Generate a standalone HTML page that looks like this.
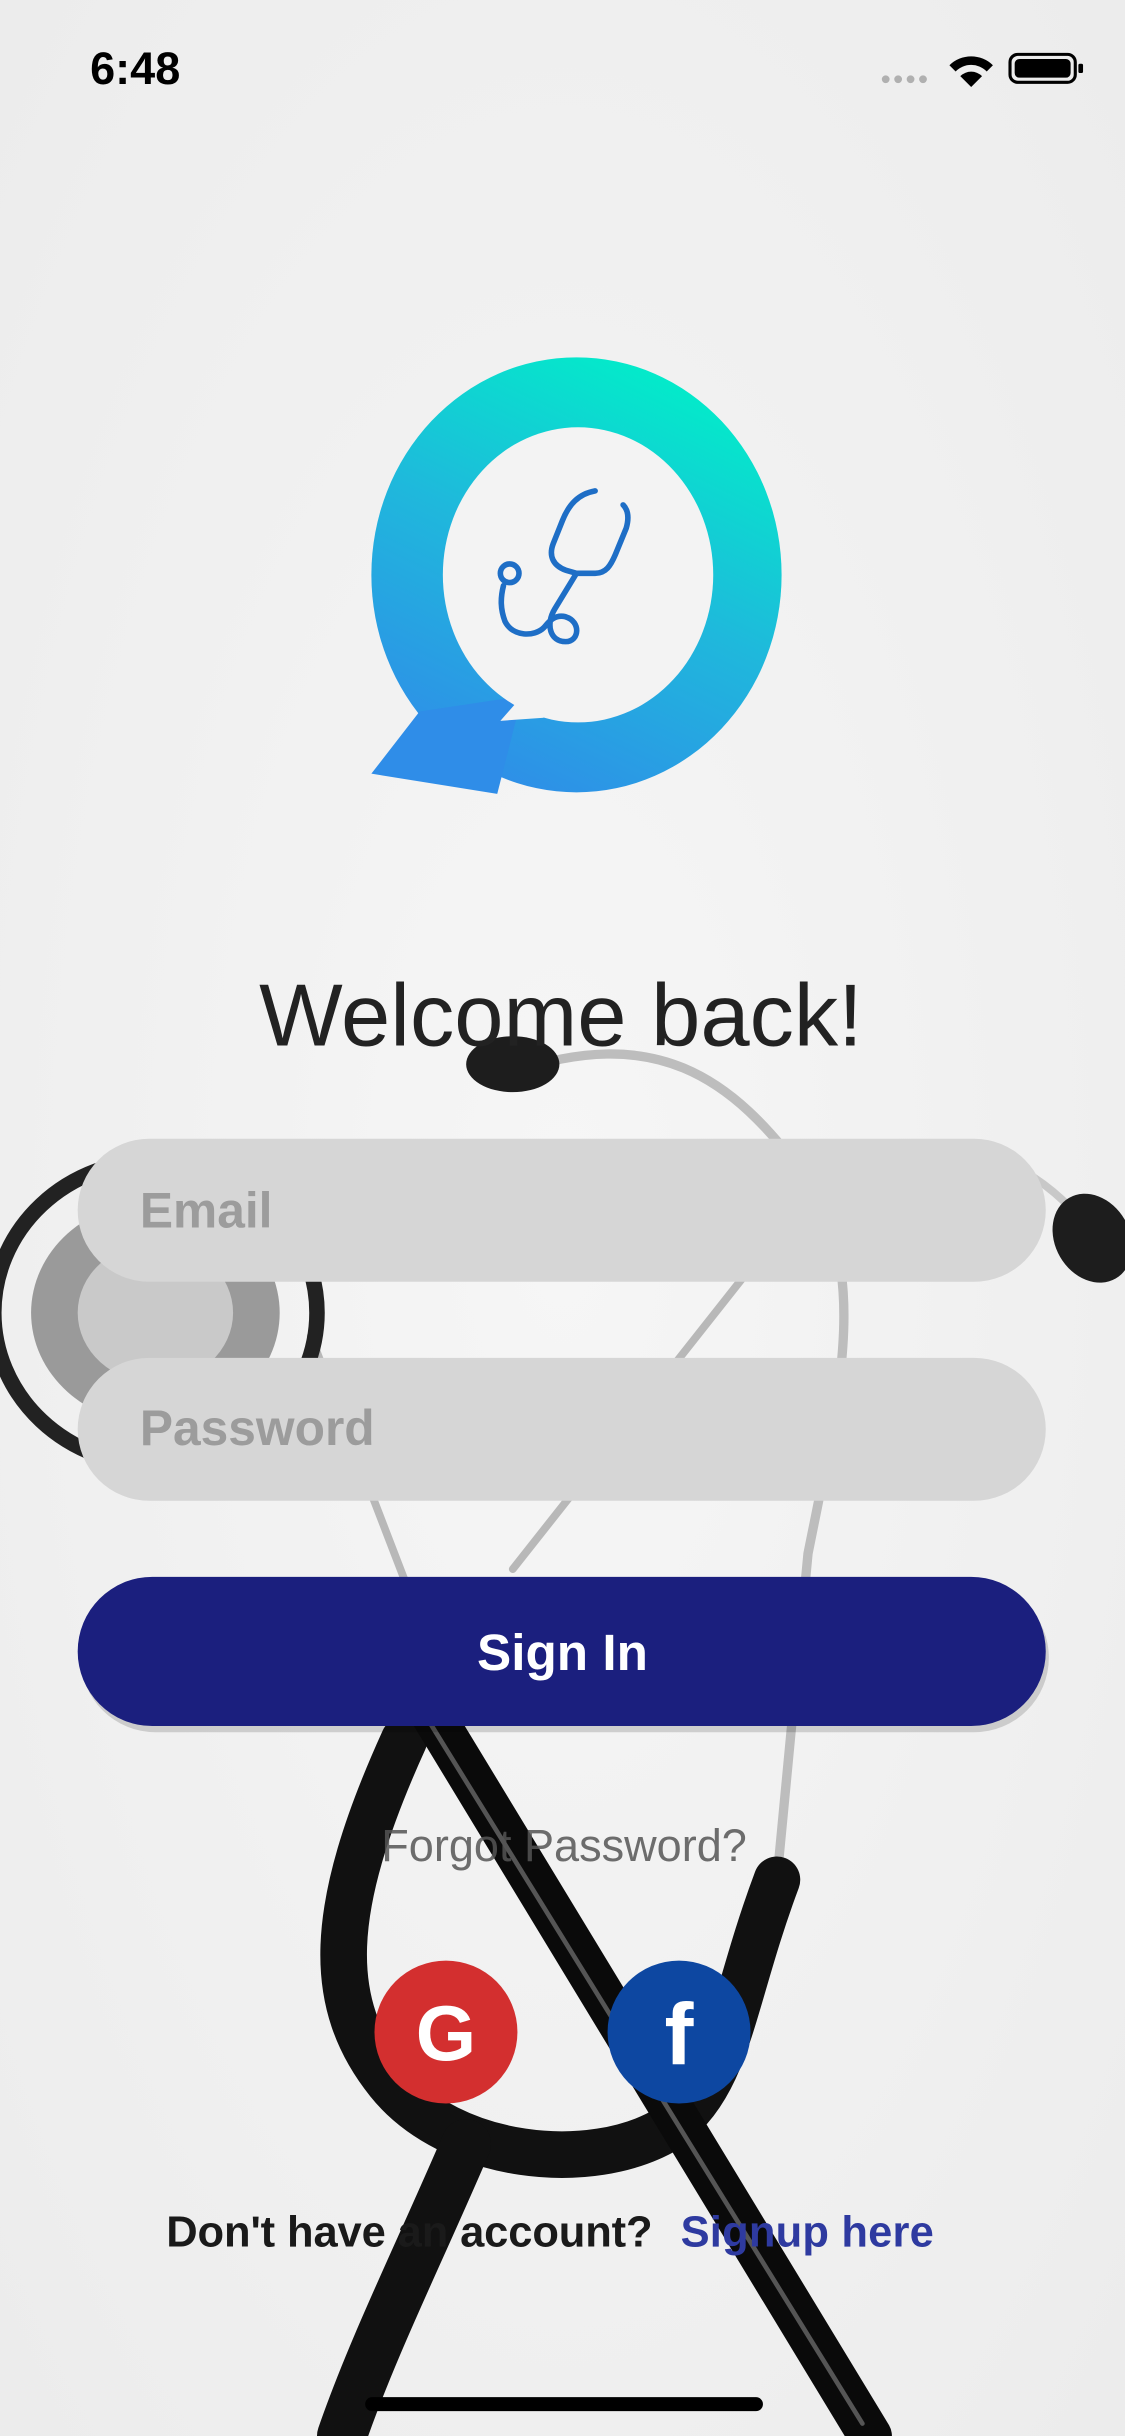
<!DOCTYPE html>
<html><head><meta charset="utf-8"><style>
html,body{margin:0;padding:0;width:1125px;height:2436px;overflow:hidden;background:#f2f2f2}
svg{display:block}
text{font-family:"Liberation Sans","DejaVu Sans",sans-serif}
</style></head><body>
<svg width="1125" height="2436" viewBox="0 0 724 1568" preserveAspectRatio="none">
<defs>
<linearGradient id="g" x1="0.75" y1="0" x2="0.3" y2="1">
<stop offset="0" stop-color="#00f0c8"/><stop offset="0.5" stop-color="#1fb8dc"/><stop offset="1" stop-color="#2f8de8"/>
</linearGradient>
<radialGradient id="bg" cx="0.5" cy="0.5" r="0.7"><stop offset="0" stop-color="#f6f6f6"/><stop offset="1" stop-color="#ececec"/></radialGradient>
</defs>
<rect width="724" height="1568" fill="url(#bg)"/>
<g fill="none" stroke-linecap="round">
<path d="M330,690 C420,660 470,690 520,760 C560,820 540,900 520,1000 L500,1210" stroke="#bdbdbd" stroke-width="6"/>
<path d="M520,760 C600,720 660,740 700,790" stroke="#c8c8c8" stroke-width="5"/>
<path d="M480,820 L330,1010" stroke="#b8b8b8" stroke-width="5"/>
<path d="M300,1120 L200,860" stroke="#b8b8b8" stroke-width="5"/>
<path d="M500,1210 C470,1290 470,1340 430,1370 C380,1400 290,1390 250,1340 C210,1290 210,1230 260,1120" stroke="#111" stroke-width="30"/>
<path d="M300,1380 C270,1450 240,1510 220,1568" stroke="#111" stroke-width="32"/>
<path d="M270,1090 L560,1568" stroke="#0a0a0a" stroke-width="28"/>
<path d="M265,1090 L555,1560" stroke="#555" stroke-width="3"/>
</g>
<ellipse cx="100" cy="845" rx="104" ry="98" fill="none" stroke="#222" stroke-width="10"/>
<ellipse cx="100" cy="845" rx="80" ry="72" fill="#9a9a9a"/>
<ellipse cx="100" cy="845" rx="50" ry="45" fill="#c9c9c9"/>
<ellipse cx="330" cy="685" rx="30" ry="18" fill="#1d1d1d"/>
<ellipse cx="703" cy="797" rx="24" ry="30" fill="#1d1d1d" transform="rotate(-30 703 797)"/>
<!-- logo -->
<ellipse cx="371" cy="370" rx="132" ry="140" fill="url(#g)"/>
<polygon points="270,458 239,498 320,511 336,448" fill="#2f8de8"/>
<ellipse cx="372" cy="370" rx="87" ry="95" fill="#f3f3f3"/>
<polygon points="318,435 337,447 322,464 350,462" fill="#f3f3f3"/>
<g fill="none" stroke="#1e6ec6" stroke-width="3.6" stroke-linecap="round" stroke-linejoin="round">
<path d="M383,316 C372,318 366,325 362,335 L356,350 C353,358 356,364 364,367 L371,369 L383,369 C390,369 393,364 396,357 L403,340 C405,333 404,328 401,325"/>
<path d="M371,369 L357,392 C351,402 354,413 364,413 C373,413 374,400 364,397 C356,395 352,402 350,404 C344,410 330,410 325,400 C322,392 322,385 324,377"/>
<circle cx="328" cy="369" r="6"/>
</g>
<!-- status bar -->
<text x="58" y="54" font-size="29" font-weight="bold" fill="#000">6:48</text>
<g fill="#b0b0b0"><circle cx="570" cy="51" r="2.5"/><circle cx="578" cy="51" r="2.5"/><circle cx="586" cy="51" r="2.5"/><circle cx="594" cy="51" r="2.5"/></g>
<path d="M611,42 A20,20 0 0 1 639,42 L635,46 A14,14 0 0 0 615,46 Z M618,49 A10,10 0 0 1 632,49 L625,56 Z" fill="#000"/>
<rect x="650" y="35" width="42" height="18" rx="5" fill="none" stroke="#000" stroke-width="2"/>
<rect x="653" y="38" width="36" height="12" rx="3" fill="#000"/>
<rect x="694" y="41" width="3" height="6" rx="1" fill="#000"/>
<!-- text & form -->
<text x="361" y="673" font-size="57" fill="#222" text-anchor="middle">Welcome back!</text>
<rect x="50" y="733" width="623" height="92" rx="46" fill="#d6d6d6"/>
<text x="90" y="790" font-size="32" font-weight="bold" fill="#9c9c9c">Email</text>
<rect x="50" y="874" width="623" height="92" rx="46" fill="#d6d6d6"/>
<text x="90" y="930" font-size="32" font-weight="bold" fill="#9c9c9c">Password</text>
<rect x="52" y="1019" width="623" height="96" rx="48" fill="#000" opacity="0.15"/>
<rect x="50" y="1015" width="623" height="96" rx="48" fill="#1b1f7e"/>
<text x="362" y="1075" font-size="33" font-weight="bold" fill="#fff" text-anchor="middle">Sign In</text>
<text x="363" y="1198" font-size="29" fill="#555" text-anchor="middle" opacity="0.85">Forgot Password?</text>
<circle cx="287" cy="1308" r="46" fill="#d32f2f"/>
<text x="287" y="1326" font-size="50" font-weight="bold" fill="#fff" text-anchor="middle">G</text>
<circle cx="437" cy="1308" r="46" fill="#0d47a1"/>
<text x="437" y="1329" font-size="56" font-weight="bold" fill="#fff" text-anchor="middle">f</text>
<text x="107" y="1446" font-size="28" font-weight="bold" fill="#1a1a1a" textLength="313">Don't have an account?</text>
<text x="438" y="1446" font-size="28" font-weight="bold" fill="#2e3aa0" textLength="163">Signup here</text>
<rect x="235" y="1543" width="256" height="9" rx="4.5" fill="#000"/>
</svg>
</body></html>
